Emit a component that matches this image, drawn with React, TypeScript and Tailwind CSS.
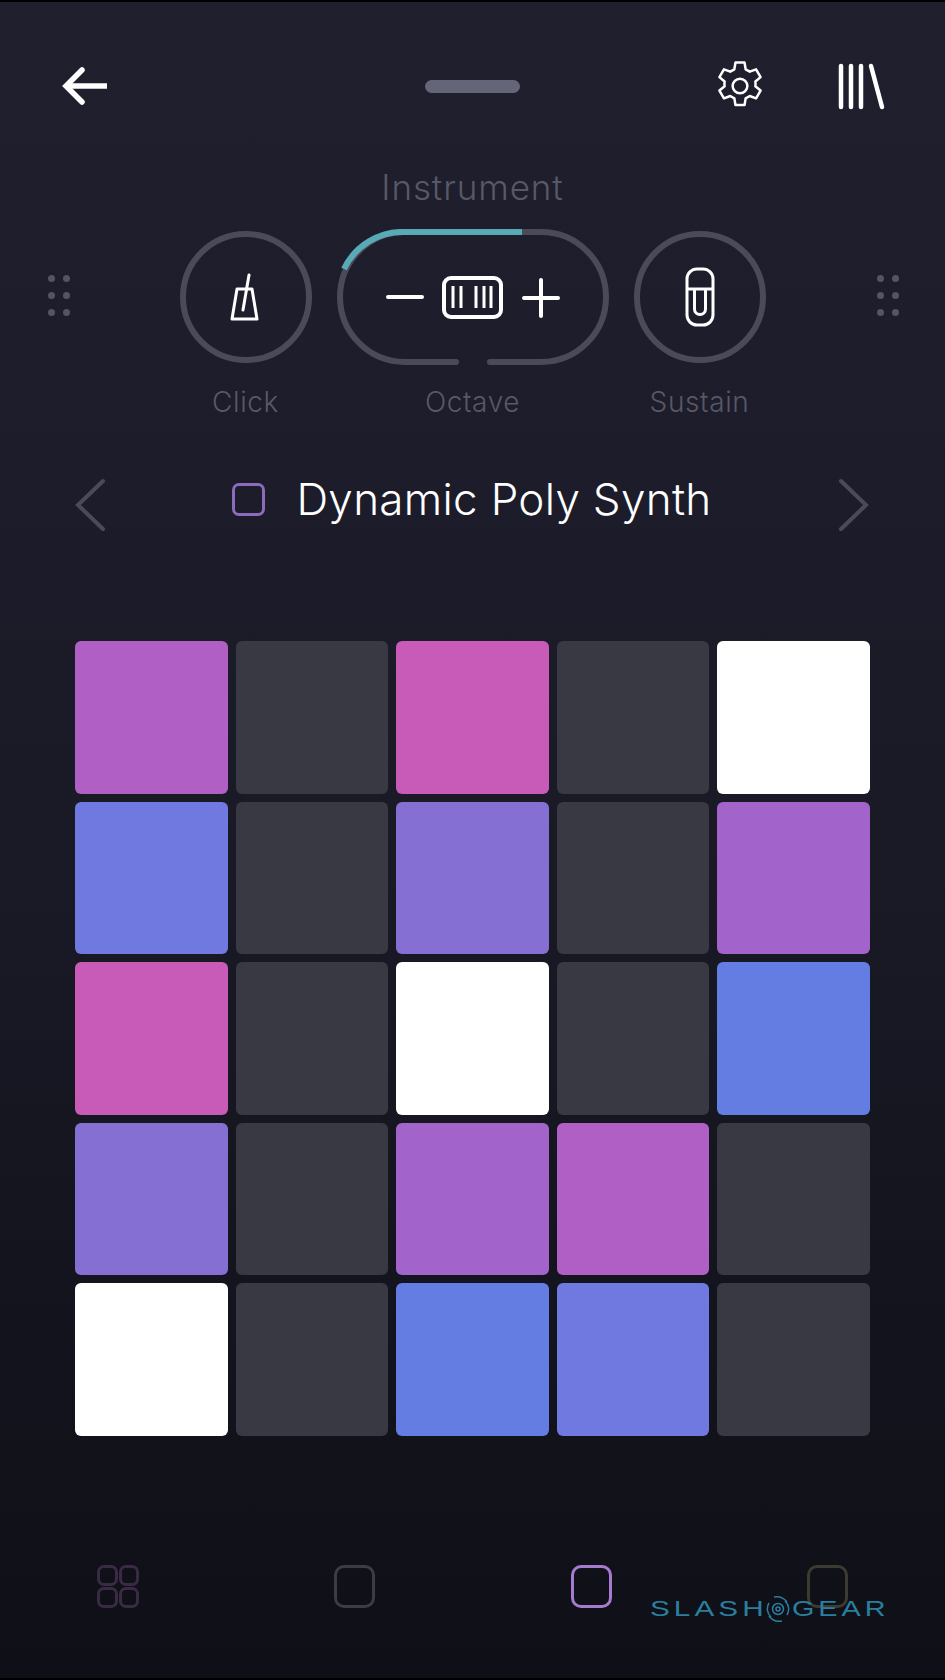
import { ReactNode } from 'react';

const DARK = 'bg-[#383943]';
const cells = [
  'bg-[#b05fc4]', DARK, 'bg-[#c85ab8]', DARK, 'bg-white',
  'bg-[#6f79df]', DARK, 'bg-[#866fd3]', DARK, 'bg-[#a263ca]',
  'bg-[#c85ab8]', DARK, 'bg-white', DARK, 'bg-[#637de3]',
  'bg-[#866fd3]', DARK, 'bg-[#a263ca]', 'bg-[#b05fc4]', DARK,
  'bg-white', DARK, 'bg-[#637de3]', 'bg-[#6f79df]', DARK,
];

const Dots = () => (
  <div className="grid grid-cols-2 gap-x-[8px] gap-y-[10px]">
    {[0, 1, 2, 3, 4, 5].map((i) => (
      <div key={i} className="w-[7px] h-[7px] rounded-full bg-[#555560]" />
    ))}
  </div>
);

const Round = ({ children }: { children: ReactNode }) => (
  <div className="w-[132px] h-[132px] rounded-full border-[6px] border-[#4b4b58] flex items-center justify-center">
    {children}
  </div>
);

const Label = ({ className, children }: { className: string; children: ReactNode }) => (
  <div className={`text-[28px] leading-[34px] tracking-[0.6px] font-light text-[#585866] text-center ${className}`}>{children}</div>
);

const TabSquare = ({ className }: { className: string }) => (
  <div className={`w-[41px] h-[43px] rounded-[10px] border-[3px] ${className}`} />
);

function Gear() {
  return (
    <svg width="52" height="52" viewBox="0 0 24 24" fill="none" stroke="white" strokeWidth="1.15" strokeLinejoin="round">
      <path d="M9.9 1.2h4.2l.5 3.1 1.9 1.1 2.9-1.1 2.1 3.6-2.4 2c.1.7.1 1.5 0 2.2l2.4 2-2.1 3.6-2.9-1.1-1.9 1.1-.5 3.1H9.9l-.5-3.1-1.9-1.1-2.9 1.1-2.1-3.6 2.4-2a7 7 0 0 1 0-2.2l-2.4-2 2.1-3.6 2.9 1.1 1.9-1.1z" />
      <circle cx="12" cy="12" r="3.4" />
    </svg>
  );
}

export default function App() {
  return (
    <div
      className="relative w-[945px] h-[1680px] overflow-hidden flex flex-col border-y-2 border-black bg-gradient-to-b from-[#1f1f2e] via-[#1a1a27] to-[#0f0f17] font-['Inter','Liberation_Sans',sans-serif]"
    >
      {/* Top bar */}
      <div className="flex items-center h-[52px] mt-[58px] pl-[60px] pr-[60px]">
        <div className="flex-1">
          <svg width="48" height="40" viewBox="0 0 48 40" fill="none" stroke="white" strokeWidth="5.5" strokeLinejoin="miter">
            <path d="M47 20H6" />
            <path d="M22 4 6 20l16 16" strokeLinecap="round" />
          </svg>
        </div>
        <div className="w-[95px] h-[13px] rounded-full bg-[#65657a]" />
        <div className="flex-1 flex items-center justify-end gap-[72px]">
          <Gear />
          <svg width="47" height="47" viewBox="0 0 47 47" fill="none" stroke="white" strokeWidth="4.5" strokeLinecap="round">
            <path d="M3 3v41M13 3v41M23 3v41M33 3l11 41" />
          </svg>
        </div>
      </div>

      <div className="mt-[53px] text-center text-[35px] leading-[44px] tracking-[0.9px] font-light text-[#585866]">Instrument</div>

      {/* Controls */}
      <div className="relative flex items-center justify-center gap-[26px] h-[136px] mt-[20px]">
        <div className="absolute left-[48px] top-[46px]"><Dots /></div>
        <Round>
          <svg width="30" height="48" viewBox="0 0 30 48" fill="none" stroke="white" strokeWidth="3" strokeLinejoin="round" className="mr-[2px]">
            <path d="M7 16h15l5 30H2z" />
            <path d="M19 2l-6 35" strokeLinecap="round" />
          </svg>
        </Round>
        <svg width="272" height="136" viewBox="0 0 272 136" fill="none" strokeWidth="6" strokeLinecap="round" className="mx-[-1px]">
          <path d="M119 133H68A65 65 0 0 1 68 3h136a65 65 0 0 1 0 130h-51" stroke="#4b4b58" />
          <path d="M7 40A65 65 0 0 1 68 3h117" stroke="#58aab6" strokeLinecap="butt" />
          <path d="M51 68h34" stroke="white" strokeWidth="4" />
          <rect x="107" y="49" width="57" height="39" rx="7" stroke="white" strokeWidth="4" />
          <path d="M116 57v22M124 57v22M139 57v22M147 57v22M154 57v22" stroke="white" strokeWidth="3" strokeLinecap="butt" />
          <path d="M187 69h34M204 51v36" stroke="white" strokeWidth="4" />
        </svg>
        <Round>
          <svg width="30" height="60" viewBox="0 0 30 60" fill="none" stroke="white" strokeWidth="3">
            <rect x="2" y="2" width="26" height="56" rx="10" />
            <path d="M2 22h26" />
            <path d="M9.5 22v20a5.5 5.5 0 0 0 11 0V22" />
          </svg>
        </Round>
        <div className="absolute right-[46px] top-[46px]"><Dots /></div>
      </div>

      <div className="flex justify-center gap-[26px] mt-[20px]">
        <Label className="w-[132px]">Click</Label>
        <Label className="w-[270px]">Octave</Label>
        <Label className="w-[132px]">Sustain</Label>
      </div>

      {/* Preset selector */}
      <div className="flex items-center justify-between h-[56px] mt-[52px] pl-[74px] pr-[75px]">
        <svg width="32" height="54" viewBox="0 0 32 54" fill="none" stroke="#4a4a58" strokeWidth="4" strokeLinecap="round" className="mt-[12px]">
          <path d="M29 3 4 27l25 24" />
        </svg>
        <div className="flex items-center gap-[31px]">
          <div className="w-[33px] h-[33px] rounded-[7px] border-[3px] border-[#8b6bbd]" />
          <div className="text-[44px] leading-[56px] tracking-[0.3px] font-light text-white">Dynamic Poly Synth</div>
        </div>
        <svg width="32" height="54" viewBox="0 0 32 54" fill="none" stroke="#4a4a58" strokeWidth="4" strokeLinecap="round" className="mt-[12px]">
          <path d="M3 3l25 24L3 51" />
        </svg>
      </div>

      {/* Pads */}
      <div className="grid grid-cols-5 grid-rows-5 gap-[8px] w-[795px] h-[795px] mt-[114px] ml-[75px]">
        {cells.map((c, i) => (
          <div key={i} className={`rounded-[6px] ${c}`} />
        ))}
      </div>

      {/* Bottom tabs */}
      <div className="flex items-center mt-[129px] pl-[97px]">
        <div className="grid grid-cols-2 gap-[1px] w-[42px] h-[43px] mr-[195px]">
          {[0, 1, 2, 3].map((i) => (
            <div key={i} className="rounded-[7px] border-[3px] border-[#3a2b45]" />
          ))}
        </div>
        <TabSquare className="border-[#3c3c46] mr-[196px]" />
        <TabSquare className="border-[#a67ad0] mr-[195px]" />
        <TabSquare className="border-[#3b3b2f]" />
      </div>

      {/* Watermark */}
      <div className="absolute left-[650px] top-[1593px] flex items-center text-[#2a7f9f] text-[22px] leading-[26px] font-['Liberation_Sans',sans-serif] tracking-[3px]">
        <span className="w-[114px] scale-x-[1.35] origin-left">SLASH</span>
        <svg width="26" height="28" viewBox="0 0 26 28" fill="none" stroke="#2a7f9f" strokeWidth="1.5" className="mx-[1px]">
          <circle cx="13" cy="14" r="2" />
          <circle cx="13" cy="14" r="5.5" />
          <path d="M4 8a11 11 0 0 0 2 14M22 20a11 11 0 0 0-2-14M9 2a13 13 0 0 1 13 5M17 26a13 13 0 0 1-13-5" />
        </svg>
        <span className="w-[95px] scale-x-[1.31] origin-left">GEAR</span>
      </div>
    </div>
  );
}
